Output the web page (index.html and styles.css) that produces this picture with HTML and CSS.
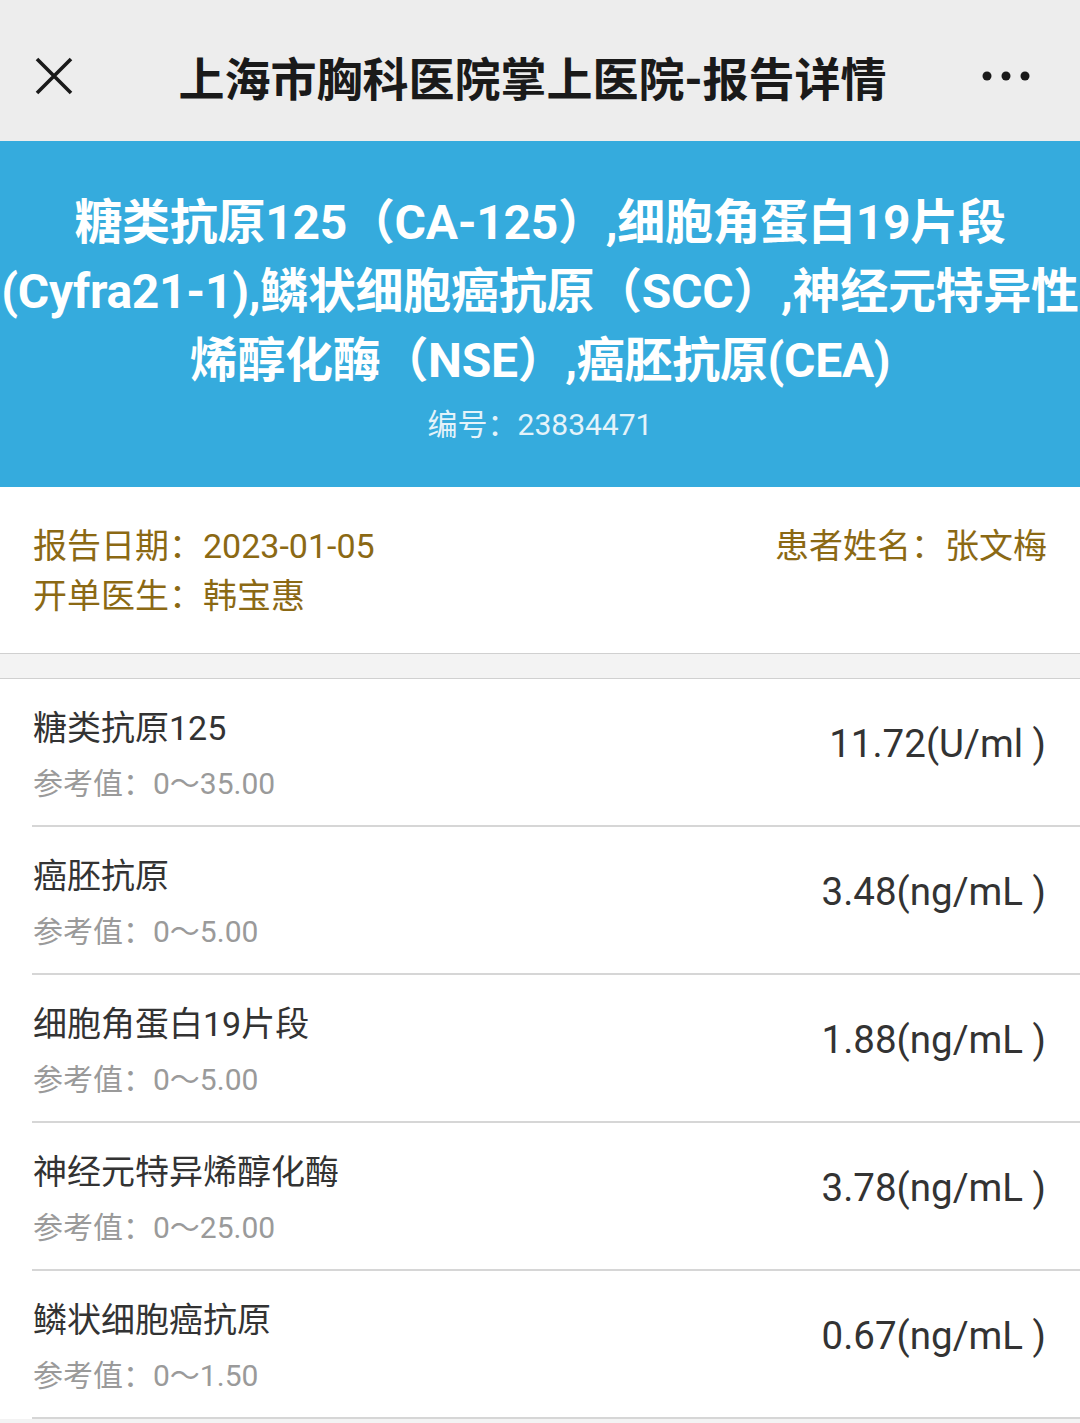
FILE: index.html
```html
<!DOCTYPE html>
<html lang="zh-CN">
<head>
<meta charset="utf-8">
<title>报告详情</title>
<link rel="stylesheet" href="styles.css">
</head>
<body>
<header class="topbar">
  <div class="icon-close">
    <svg width="38" height="38" viewBox="0 0 38 38"><path d="M2 2 L36 36 M36 2 L2 36" stroke="#1a1a1a" stroke-width="3.6" fill="none"/></svg>
  </div>
  <div class="topbar-title">上海市胸科医院掌上医院-报告详情</div>
  <div class="icon-more">
    <svg width="48" height="10" viewBox="0 0 48 10"><circle cx="5" cy="5" r="4.5" fill="#1a1a1a"/><circle cx="24" cy="5" r="4.5" fill="#1a1a1a"/><circle cx="43" cy="5" r="4.5" fill="#1a1a1a"/></svg>
  </div>
</header>

<section class="banner">
  <h1 class="banner-title">
    <span class="line">糖类抗原125（CA-125）,细胞角蛋白19片段</span>
    <span class="line">(Cyfra21-1),鳞状细胞癌抗原（SCC）,神经元特异性</span>
    <span class="line">烯醇化酶（NSE）,癌胚抗原(CEA)</span>
  </h1>
  <div class="banner-no">编号：23834471</div>
</section>

<section class="info">
  <div class="info-row">
    <span>报告日期：2023-01-05</span>
    <span>患者姓名：张文梅</span>
  </div>
  <div class="info-row">
    <span>开单医生：韩宝惠</span>
  </div>
</section>

<div class="gap"></div>

<section class="list">
  <div class="item">
    <div class="item-left">
      <div class="item-name">糖类抗原125</div>
      <div class="item-ref">参考值：0～35.00</div>
    </div>
    <div class="item-value">11.72(U/ml )</div>
  </div>
  <div class="item">
    <div class="item-left">
      <div class="item-name">癌胚抗原</div>
      <div class="item-ref">参考值：0～5.00</div>
    </div>
    <div class="item-value">3.48(ng/mL )</div>
  </div>
  <div class="item">
    <div class="item-left">
      <div class="item-name">细胞角蛋白19片段</div>
      <div class="item-ref">参考值：0～5.00</div>
    </div>
    <div class="item-value">1.88(ng/mL )</div>
  </div>
  <div class="item">
    <div class="item-left">
      <div class="item-name">神经元特异烯醇化酶</div>
      <div class="item-ref">参考值：0～25.00</div>
    </div>
    <div class="item-value">3.78(ng/mL )</div>
  </div>
  <div class="item">
    <div class="item-left">
      <div class="item-name">鳞状细胞癌抗原</div>
      <div class="item-ref">参考值：0～1.50</div>
    </div>
    <div class="item-value">0.67(ng/mL )</div>
  </div>
</section>
</body>
</html>
```

FILE: styles.css
```css
* { box-sizing: border-box; }
html, body {
  margin: 0;
  padding: 0;
}
body {
  width: 1080px;
  min-height: 1423px;
  background: #f3f3f3;
  font-family: Roboto, "Noto Sans CJK SC", sans-serif;
  color: #333;
}
.topbar {
  height: 141px;
  background: #ededed;
  display: flex;
  align-items: center;
  padding: 10px 50px 0 35px;
}
.icon-close {
  width: 38px;
  height: 38px;
  display: flex;
}
.topbar-title {
  flex: 1;
  text-align: center;
  font-size: 46px;
  font-weight: 700;
  color: #1a1a1a;
  padding-left: 10px;
}
.icon-more {
  display: flex;
  width: 48px;
}
.banner {
  background: #35abdd;
  height: 346px;
  padding-top: 47px;
  text-align: center;
  color: #fff;
}
.banner-title {
  margin: 0;
  font-size: 48px;
  font-weight: 700;
  line-height: 69px;
  letter-spacing: -0.3px;
}
.banner-title .line {
  display: block;
  white-space: nowrap;
}
.banner-no {
  margin-top: 10px;
  font-size: 30px;
  line-height: 40px;
  color: #e4f3fa;
}
.info {
  background: #fff;
  height: 166px;
  padding: 34px 33px 0 33px;
  color: #8b6914;
  font-size: 34px;
}
.info-row {
  display: flex;
  justify-content: space-between;
  line-height: 50px;
}
.gap {
  height: 26px;
  background: #f3f3f3;
  border-top: 1px solid #d0d0d0;
  border-bottom: 1px solid #d0d0d0;
}
.list {
  background: #fff;
  padding-left: 32px;
}
.item {
  height: 148px;
  display: flex;
  justify-content: space-between;
  align-items: center;
  padding-right: 34px;
  border-bottom: 2px solid #d6d6d6;
}
.item-left {
  display: flex;
  flex-direction: column;
  padding-top: 12px;
}
.item-name {
  font-size: 34px;
  line-height: 52px;
  color: #333;
  padding-left: 1px;
}
.item-ref {
  font-size: 30px;
  line-height: 60px;
  color: #9a9a9a;
  padding-left: 1px;
}
.item-value {
  font-size: 38.5px;
  color: #333;
  padding-bottom: 18px;
}
```
